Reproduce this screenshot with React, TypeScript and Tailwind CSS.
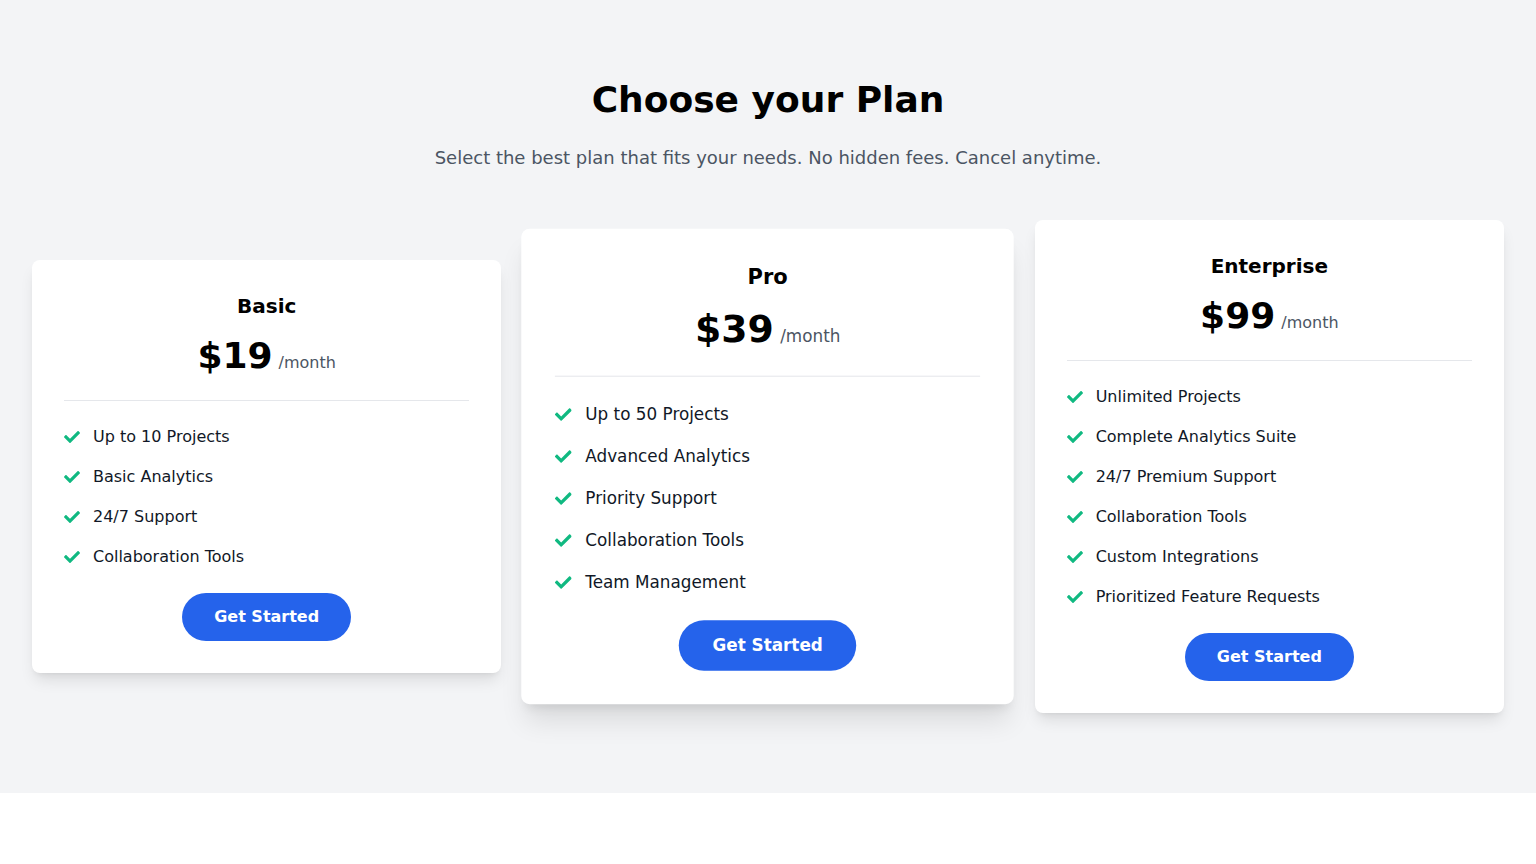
import { FaCheck } from "react-icons/fa";

const plans = [
  {
    name: "Basic",
    price: "$19",
    features: ["Up to 10 Projects", "Basic Analytics", "24/7 Support", "Collaboration Tools"],
  },
  {
    name: "Pro",
    price: "$39",
    featured: true,
    features: [
      "Up to 50 Projects",
      "Advanced Analytics",
      "Priority Support",
      "Collaboration Tools",
      "Team Management",
    ],
  },
  {
    name: "Enterprise",
    price: "$99",
    features: [
      "Unlimited Projects",
      "Complete Analytics Suite",
      "24/7 Premium Support",
      "Collaboration Tools",
      "Custom Integrations",
      "Prioritized Feature Requests",
    ],
  },
];

function PlanCard({ plan }: { plan: (typeof plans)[number] }) {
  return (
    <div
      className={
        plan.featured
          ? "bg-white rounded-lg shadow-xl p-8 scale-105"
          : "bg-white rounded-lg shadow-lg p-8"
      }
    >
      <h3 className="text-xl font-bold text-center text-black">{plan.name}</h3>
      <div className="mt-4 flex items-baseline justify-center">
        <span className="text-4xl font-bold text-black">{plan.price}</span>
        <span className="ml-1.5 text-base text-[#4b5563]">/month</span>
      </div>
      <ul className="mt-6 border-t border-[#e5e7eb] pt-6 space-y-4">
        {plan.features.map((f) => (
          <li key={f} className="flex items-center text-base text-[#111827]">
            <FaCheck className="w-4 h-4 text-[#10b981] mr-[13px] shrink-0" />
            {f}
          </li>
        ))}
      </ul>
      <div className="mt-6 flex justify-center">
        <button className="bg-[#2563eb] text-white font-bold rounded-full px-8 py-3 text-base">
          Get Started
        </button>
      </div>
    </div>
  );
}

export default function App() {
  return (
    <div className="font-['DejaVu_Sans',sans-serif]">
      <section className="bg-[#f3f4f6] py-20 px-8">
        <h1 className="text-4xl font-bold text-center text-black">Choose your Plan</h1>
        <p className="mt-6 text-lg text-center text-[#4b5563]">
          Select the best plan that fits your needs. No hidden fees. Cancel anytime.
        </p>
        <div className="mt-12 grid grid-cols-3 gap-8 items-center">
          {plans.map((p) => (
            <PlanCard key={p.name} plan={p} />
          ))}
        </div>
      </section>
    </div>
  );
}
